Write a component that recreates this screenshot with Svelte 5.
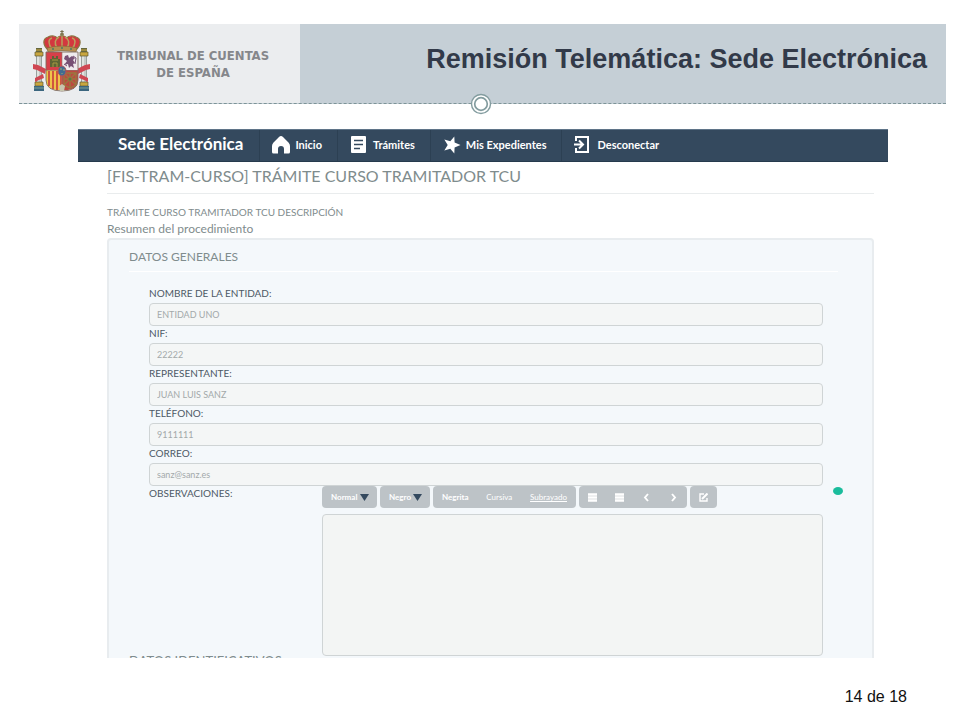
<script>
  const fields = [
    { id: 'entidad', label: 'NOMBRE DE LA ENTIDAD:', value: 'ENTIDAD UNO' },
    { id: 'nif', label: 'NIF:', value: '22222' },
    { id: 'representante', label: 'REPRESENTANTE:', value: 'JUAN LUIS SANZ' },
    { id: 'telefono', label: 'TELÉFONO:', value: '9111111' },
    { id: 'correo', label: 'CORREO:', value: 'sanz@sanz.es' }
  ];
</script>

<div class="slide">
  <header>
    <div class="brand">
      <svg class="arms" viewBox="0 0 57 62" role="img" aria-label="Escudo de España">
        <!-- crown -->
        <path d="M15 20C10 15 9 9 15 7c4-2 8-1 9 1 2-3 8-3 10 0 1-2 5-3 9-1 6 2 5 8 0 13z" fill="#d3383f" stroke="#8a7440" stroke-width="1.2" />
        <path d="M19 19C15 14 15 9 19 8M24 18C21 13 22 9 26 7M34 18c3-5 2-9-2-11M39 19c4-5 4-10 0-11M29 18V6" fill="none" stroke="#b9a05c" stroke-width="1.5" />
        <path d="M14 18q15-4 30 0l-1 4q-14-3-28 0z" fill="#b58d4d" stroke="#80653a" stroke-width=".6" />
        <circle cx="29" cy="4.500" r="2" fill="#8d8458" />
        <path d="M29 0v5M27.300 1.500h3.400" stroke="#766d4c" stroke-width="1" />
        <g fill="#477c65"><circle cx="20" cy="19" r="1" /><circle cx="29" cy="18" r="1" /><circle cx="38" cy="19" r="1" /></g>
        <!-- pillars -->
        <g>
          <path d="M3.500 24h5v30h-5zM48.500 24h5v30h-5z" fill="#dfe2df" stroke="#78817d" stroke-width=".7" />
          <path d="M7 24v30M52 24v30" stroke="#aeb5b1" />
          <path d="M2 22h8v4H2zM47 22h8v4h-8zM2 52h8v4H2zM47 52h8v4h-8z" fill="#c9a63f" stroke="#5d5934" stroke-width=".7" />
          <path d="M3 18h6v4H3zM48 18h6v4h-6z" fill="#65673e" />
          <path d="M3 20h6M48 20h6" stroke="#d0ad44" />
          <path d="M1 56h10v5H1zM46 56h10v5H46z" fill="#3b667f" />
          <path d="M1 58h10M46 58h10" stroke="#7fa096" />
          <path d="M0 34l5 1 8 4-1 5-8-4-4-1zM57 34l-5 1-8 4 1 5 8-4 4-1z" fill="#cf4652" />
          <path d="M10 44l-8 4v4l4-2 5-2zM47 44l8 4v4l-4-2-5-2z" fill="#cf4652" />
        </g>
        <!-- shield -->
        <path d="M13 22h16v19H13z" fill="#d7404a" />
        <path d="M29 22h16v19H29z" fill="#efebed" />
        <path d="M13 40h16v20q-16 1-16-10z" fill="#efc34a" />
        <path d="M29 40h16v10q0 11-16 10z" fill="#bd4940" />
        <path d="M16 41v15M20 41v18M24 41v19M28 41v19" stroke="#cb433d" stroke-width="1.700" />
        <path d="M17 37V29h2v-3h2v2h2v-2h2v3h2v8z" fill="#5e6434" />
        <path d="M20 37v-4h4v4M19 30h6" fill="none" stroke="#a79940" />
        <path d="M32 26l3-1 1 3 3-2 3 2-2 2 2 3-2 1 1 4-3-2-2 2-1-4-4 1 3-4-3-2z" fill="#785175" />
        <path d="M40 26l3 2-1 6M31 34l3 2" fill="none" stroke="#785175" />
        <path d="M31 43h12v12l-6 3-6-3zM31 43l12 12M43 43L31 55M37 43v14M31 49h12" fill="none" stroke="#99783f" stroke-width="1.300" />
        <circle cx="37" cy="49" r="1.500" fill="#577b45" />
        <path d="M29 22v38M13 40.500h32" stroke="#91736b" stroke-width=".6" />
        <ellipse cx="29" cy="41" rx="4" ry="5" fill="#426c91" stroke="#b5525c" />
        <path d="M28 38v2M31 39v2M29 43v1" stroke="#9fac70" />
        <path d="M13 22h32v28q0 11-16 11T13 50z" fill="none" stroke="#806c5e" stroke-width=".9" />
        <path d="M26 56l3-2 3 2-1 5h-4z" fill="#c8c5ae" />
      </svg>
      <p>TRIBUNAL DE CUENTAS<br />DE ESPAÑA</p>
    </div>
    <h1>Remisión Telemática: Sede Electrónica</h1>
    <svg class="ring" viewBox="0 0 22 22" aria-hidden="true">
      <circle cx="11" cy="11" r="9.500" fill="#fff" stroke="#839c9f" stroke-width="1.400" />
      <circle cx="11" cy="11" r="6.300" fill="#fff" stroke="#839c9f" stroke-width="1.700" />
    </svg>
  </header>

  <main>
    <nav>
      <a class="home" href="#sede">Sede Electrónica</a>
      <a href="#inicio">
        <svg viewBox="0 0 18 18"><path d="M9 0q1 0 2 1l5.500 5.500Q18 8 18 10v6q0 1.500-1.500 1.500H12V13q0-3-3-3t-3 3v4.500H1.500Q0 17.500 0 16v-6q0-2 1.500-3.500L7 1q1-1 2-1z" fill="#fff" /></svg>
        Inicio
      </a>
      <a href="#tramites">
        <svg viewBox="0 0 18 18"><rect x="1" y="0" width="15" height="17" rx="1" fill="#fff" /><path d="M4 4.500h9M4 8.500h9M4 12.500h6" stroke="#34495e" stroke-width="1.700" /></svg>
        Trámites
      </a>
      <a href="#expedientes">
        <svg viewBox="0 0 18 18"><path d="M17.500 9l-5.900 2.400-.3 6-4-4.700-6 1.800L4.700 9 1.300 3.500l6 1.800 4-4.700.3 6z" fill="#fff" /></svg>
        Mis Expedientes
      </a>
      <a href="#salir">
        <svg viewBox="0 0 18 18" fill="none" stroke="#fff" stroke-width="2"><path d="M2 5V1h12v15H2v-4" /><path d="M0 8.500h8M5 4.500l4 4-4 4" /></svg>
        Desconectar
      </a>
    </nav>

    <div class="content">
      <h2>[FIS-TRAM-CURSO] TRÁMITE CURSO TRAMITADOR TCU</h2>
      <p class="description">TRÁMITE CURSO TRAMITADOR TCU DESCRIPCIÓN</p>
      <p class="summary">Resumen del procedimiento</p>

      <form class="panel">
        <h3>DATOS GENERALES</h3>
        <div class="fields">
          {#each fields as field}
            <label for={field.id}>{field.label}</label>
            <input id={field.id} value={field.value} readonly />
          {/each}
          <div class="notes">
            <label for="observaciones">OBSERVACIONES:</label>
            <div class="editor">
              <div class="toolbar">
                <div class="group pick size">
                  <select aria-label="Tamaño"><option>Normal</option></select>
                  <svg viewBox="0 0 9 7" aria-hidden="true"><path d="M0 0h9L4.500 7z" fill="#34495e" /></svg>
                </div>
                <div class="group pick color">
                  <select aria-label="Color"><option>Negro</option></select>
                  <svg viewBox="0 0 9 7" aria-hidden="true"><path d="M0 0h9L4.500 7z" fill="#34495e" /></svg>
                </div>
                <div class="group styles">
                  <button type="button">Negrita</button>
                  <button type="button" class="light">Cursiva</button>
                  <button type="button" class="light under">Subrayado</button>
                </div>
                <div class="group">
                  <button type="button" class="icon" aria-label="Lista"><svg viewBox="0 0 9 9"><path d="M0 1.500h9M0 4.500h9M0 7.500h9" stroke="#fff" stroke-width="2.400" /></svg></button>
                  <button type="button" class="icon" aria-label="Lista numerada"><svg viewBox="0 0 9 9"><path d="M0 1.500h9M0 4.500h9M0 7.500h9" stroke="#fff" stroke-width="2.400" /></svg></button>
                  <button type="button" class="icon" aria-label="Reducir sangría"><svg viewBox="0 0 9 9"><path d="M6 1L3 4.500 6 8" fill="none" stroke="#fff" stroke-width="1.900" /></svg></button>
                  <button type="button" class="icon" aria-label="Aumentar sangría"><svg viewBox="0 0 9 9"><path d="M3 1l3 3.500L3 8" fill="none" stroke="#fff" stroke-width="1.900" /></svg></button>
                </div>
                <div class="group">
                  <button type="button" class="icon" aria-label="Editar"><svg viewBox="0 0 9 9" fill="none" stroke="#fff" stroke-width="1.400"><path d="M5 1H1v7h7V5" /><path d="M3 6l5.500-5.500" stroke-width="2" /></svg></button>
                </div>
              </div>
              <textarea id="observaciones" readonly></textarea>
            </div>
            <span class="status"></span>
          </div>
        </div>
        <h3 class="next">DATOS IDENTIFICATIVOS</h3>
      </form>
    </div>
  </main>

  <footer>14 de 18</footer>
</div>

<style>
  :global(body) { margin: 0; background: #fff; }
  * { box-sizing: border-box; }
  h1, h2, h3, p { margin: 0; font-weight: 400; }

  .slide {
    display: flex;
    flex-direction: column;
    height: 100vh;
    padding: 24px 14px 0 19px;
    font-family: Lato, "Open Sans", sans-serif;
  }

  header {
    position: relative;
    display: flex;
    flex: none;
    height: 80px;
    background: #c5cfd6;
    border-bottom: 1px dashed #7d9498;
  }
  .brand {
    display: flex;
    align-items: center;
    width: 281px;
    padding-left: 14px;
    background: #ebedef;
  }
  .arms { width: 57px; height: 62px; margin-bottom: 6px; }
  .brand p {
    flex: 1;
    padding-right: 4px;
    color: #85878b;
    font: 700 13px/17px "DejaVu Sans Condensed", sans-serif;
    text-align: center;
  }
  h1 {
    flex: 1;
    padding-right: 19px;
    color: #323a49;
    font: 700 27px/70px "Liberation Sans", Arial, sans-serif;
    text-align: right;
    white-space: nowrap;
  }
  .ring {
    position: absolute;
    bottom: -12px;
    left: 50%;
    width: 22px;
    height: 22px;
    margin-left: -13px;
  }

  main {
    flex: 1;
    min-height: 0;
    margin: 25px 58px 0 59px;
    overflow: hidden;
  }
  nav {
    display: flex;
    height: 33px;
    background: #34495e;
    border-top: 1px solid #5f7488;
    border-bottom: 1px solid #263a4d;
  }
  nav a {
    display: flex;
    align-items: center;
    gap: 5px;
    padding: 0 15px 2px 12px;
    border-left: 1px solid #2c4053;
    color: #fff;
    font-size: 11px;
    font-weight: 700;
    text-decoration: none;
    white-space: nowrap;
  }
  nav svg { width: 18px; height: 18px; }
  nav .home {
    padding: 0 16px 4px 40px;
    border: 0;
    font-size: 17px;
  }

  .content { padding: 4px 14px 0 29px; color: #7f8c8d; }
  h2 {
    padding-bottom: 7px;
    border-bottom: 1px solid #e9eced;
    font-size: 16px;
    line-height: 20px;
  }
  .description { padding-top: 11px; font-size: 10px; line-height: 14px; }
  .summary { padding: 2px 0 1px; font-size: 12px; line-height: 16px; }

  .panel {
    padding: 9px 20px 0;
    background: #f4f8fb;
    border: 2px solid #e8ecef;
    border-radius: 4px;
  }
  h3 {
    margin-right: 14px;
    padding-bottom: 6px;
    border-bottom: 1px solid #fff;
    font-size: 12px;
    line-height: 16px;
  }
  .fields { padding: 14px 29px 0 20px; }
  label {
    display: block;
    color: #4d5965;
    font-size: 10px;
    line-height: 14px;
    padding-bottom: 3px;
  }
  input {
    display: block;
    width: 100%;
    height: 23px;
    padding: 0 7px;
    background: #f4f6f6;
    border: 1px solid #cfd4d5;
    border-radius: 4px;
    color: #a3a9aa;
    font: 9px/18px Lato, sans-serif;
  }
  .notes { position: relative; display: flex; }
  .notes label { width: 173px; }
  .editor { flex: 1; }
  .toolbar { display: flex; gap: 3px; padding-bottom: 6px; }
  .group {
    display: flex;
    height: 22px;
    background: #bdc3c7;
    border-radius: 4px;
  }
  .pick { position: relative; }
  .size { width: 55px; }
  .color { width: 50px; }
  .pick select {
    width: 100%;
    padding: 0 0 0 9px;
    appearance: none;
    background: none;
    border: 0;
    color: #fff;
    font: 700 8px/20px Lato, sans-serif;
  }
  .pick svg {
    position: absolute;
    right: 8px;
    top: 8px;
    width: 9px;
    height: 7px;
  }
  button {
    padding: 0;
    background: none;
    border: 0;
    color: #fff;
    font: 700 8px/20px Lato, sans-serif;
  }
  .styles { justify-content: space-between; width: 143px; padding: 0 9px; }
  .light { font-weight: 400; }
  .under { text-decoration: underline; }
  .icon {
    display: flex;
    align-items: center;
    justify-content: center;
    width: 27px;
  }
  .icon svg { width: 9px; height: 9px; }
  textarea {
    display: block;
    width: 100%;
    height: 142px;
    background: #f3f5f4;
    border: 1px solid #cfd4d5;
    border-radius: 4px;
    resize: none;
  }
  .status {
    position: absolute;
    top: 1px;
    right: -20px;
    width: 10px;
    height: 8px;
    background: #1abc9c;
    border-radius: 50%;
  }
  .next { margin-top: -3px; font-size: 13px; }

  footer {
    flex: none;
    padding: 30px 39px 14px 0;
    color: #111;
    font: 16px/18px "Liberation Sans", Arial, sans-serif;
    text-align: right;
  }
</style>
